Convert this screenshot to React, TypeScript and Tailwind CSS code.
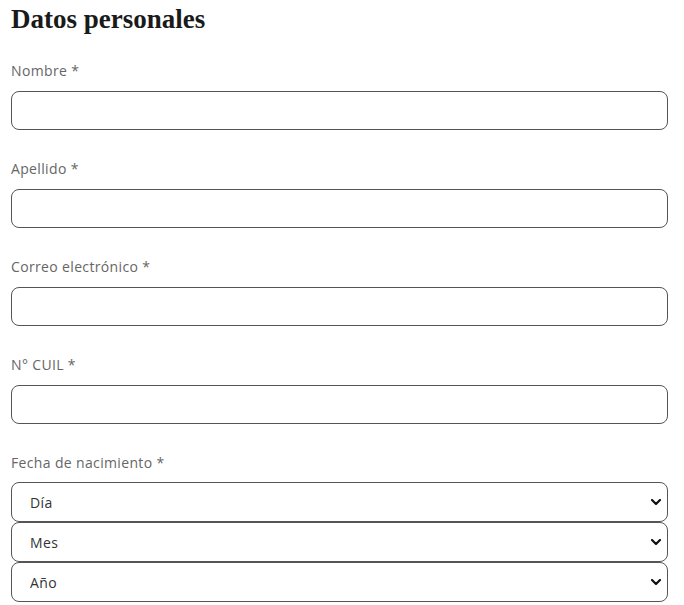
import React from 'react';

const fields: string[] = ['Nombre', 'Apellido', 'Correo electrónico', 'N° CUIL'];
const dateParts: string[] = ['Día', 'Mes', 'Año'];

const Chevron = () => (
  <svg
    viewBox="0 0 10 6"
    className="pointer-events-none absolute right-[7px] top-1/2 h-[6px] w-[10px] -translate-y-1/2"
  >
    <path
      d="M1 1l4 4 4-4"
      fill="none"
      stroke="#111"
      strokeWidth="2.2"
      strokeLinecap="round"
      strokeLinejoin="round"
    />
  </svg>
);

const FieldLabel = ({ text }: { text: string }) => (
  <label className="block h-5 text-[14px] leading-5 tracking-[0.35px] text-[#666]">
    {text} *
  </label>
);

const App = () => {
  return (
    <div
      className="min-h-screen bg-white pl-[11px] pr-[16px] pt-[3px]"
      style={{ fontFamily: '"Open Sans", "Liberation Sans", sans-serif' }}
    >
      <h2
        className="mb-[26px] text-[27px] font-bold leading-8 text-[#1a1a1a]"
        style={{ fontFamily: '"Liberation Serif", "DejaVu Serif", serif' }}
      >
        Datos personales
      </h2>

      {fields.map((field) => (
        <div key={field} className="mb-[29px]">
          <FieldLabel text={field} />
          <input
            type="text"
            className="mt-[10px] block h-[39px] w-full rounded-lg border border-[#555] bg-white px-4 text-[14px] outline-none"
          />
        </div>
      ))}

      <div>
        <FieldLabel text="Fecha de nacimiento" />
        <div className="mt-[9px] flex flex-col">
          {dateParts.map((part) => (
            <div key={part} className="relative">
              <select className="block h-[40px] w-full appearance-none rounded-lg border border-[#555] bg-white pl-[18px] text-[14px] tracking-[0.35px] text-[#333] outline-none">
                <option>{part}</option>
              </select>
              <Chevron />
            </div>
          ))}
        </div>
      </div>
    </div>
  );
};

export default App;
